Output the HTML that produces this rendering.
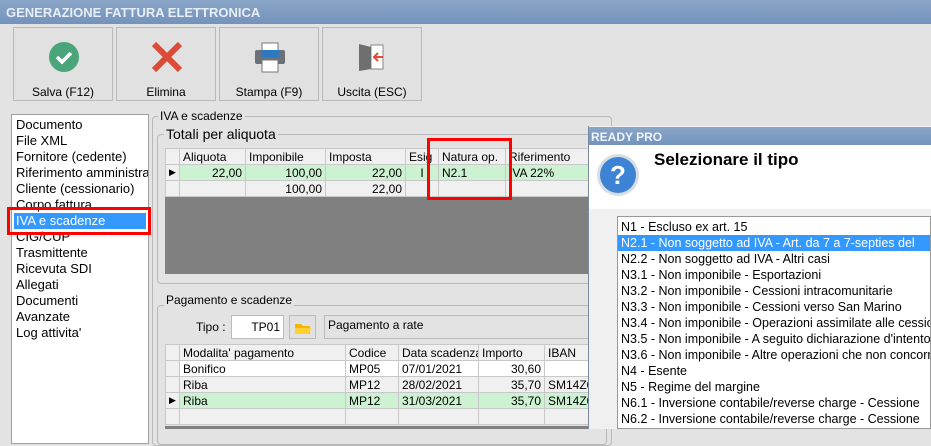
<!DOCTYPE html>
<html><head><meta charset="utf-8"><style>
*{box-sizing:border-box;margin:0;padding:0}
body{width:931px;height:429px;overflow:hidden;background:#e3e3e3;font-family:"Liberation Sans",sans-serif;font-size:12px;color:#000;position:relative}
.a{position:absolute}
.title{left:0;top:0;width:931px;height:24px;background:linear-gradient(#8aa6c8,#7393bb);color:#e8eef6;font-weight:bold;font-size:13px;padding:5px 6px}
.btn{top:27px;width:100px;height:74px;background:#e1e1e1;border:1px solid #b9b9b9;text-align:center}
.btn span{position:absolute;left:0;right:0;top:57px;font-size:12px}
.list{left:11px;top:114px;width:138px;height:330px;background:#fff;border:1px solid #a0a0a0;font-size:13px;line-height:16px;padding:2px 0 0 4px;white-space:nowrap;overflow:hidden}
.grp{border:1px solid #b8b8b8;border-radius:4px}
.lbl{background:#e3e3e3;padding:0 2px}
table{border-collapse:collapse;position:absolute;table-layout:fixed}
td{border:1px solid #c8c8c8;height:16px;padding:0 3px;white-space:nowrap;overflow:hidden;font-size:12px}
.h td{background:#f0f0f0}
.g td{background:#ccf2d2}
.r{text-align:right}
.dlist div{height:16px;line-height:16px;padding-left:3px;font-size:12.5px;white-space:nowrap}
</style></head><body>
<div class="a title">GENERAZIONE FATTURA ELETTRONICA</div>
<div class="a btn" style="left:13px"><svg class="a" style="left:34px;top:13px" width="32" height="32"><circle cx="16" cy="16" r="15" fill="#4aa57a"/><path d="M9 16l5 5 9-9" stroke="#fff" stroke-width="3.5" fill="none"/></svg><span>Salva (F12)</span></div>
<div class="a btn" style="left:116px"><svg class="a" style="left:34px;top:13px" width="32" height="32"><path d="M3 3L29 29M29 3L3 29" stroke="#dc4a38" stroke-width="6"/></svg><span>Elimina</span></div>
<div class="a btn" style="left:219px"><svg class="a" style="left:34px;top:13px" width="32" height="32"><rect x="8" y="2" width="16" height="8" fill="#fff" stroke="#777"/><rect x="1" y="9" width="30" height="14" rx="2" fill="#6b7177"/><rect x="7" y="9" width="18" height="7" fill="#2e78c2"/><rect x="8" y="19" width="16" height="12" fill="#fff" stroke="#777"/></svg><span>Stampa (F9)</span></div>
<div class="a btn" style="left:322px"><svg class="a" style="left:34px;top:13px" width="32" height="32"><rect x="14" y="4" width="12" height="24" fill="#fff" stroke="#888"/><path d="M2 3l12 3v22l-12 2z" fill="#6f6f6f"/><path d="M26 16h-9M21 12l-4 4 4 4" stroke="#e04b3a" stroke-width="2" fill="none"/></svg><span>Uscita (ESC)</span></div>

<div class="a list">Documento<br>File XML<br>Fornitore (cedente)<br>Riferimento amministra<br>Cliente (cessionario)<br>Corpo fattura<br><div style="background:#3399ff;color:#fff;margin-left:-2px;padding-left:2px;width:132px">IVA e scadenze</div>CIG/CUP<br>Trasmittente<br>Ricevuta SDI<br>Allegati<br>Documenti<br>Avanzate<br>Log attivita'</div>
<div class="a" style="left:7px;top:207px;width:144px;height:28px;border:3px solid #f00"></div>

<div class="a grp" style="left:152px;top:116px;width:460px;height:330px"></div>
<div class="a lbl" style="left:158px;top:109px">IVA e scadenze</div>
<div class="a grp" style="left:157px;top:134px;width:450px;height:150px"></div>
<div class="a lbl" style="left:164px;top:126px;font-size:14px">Totali per aliquota</div>
<table style="left:165px;top:148px;width:430px">
<colgroup><col style="width:14px"><col style="width:66px"><col style="width:80px"><col style="width:80px"><col style="width:33px"><col style="width:67px"><col></colgroup>
<tr class="h"><td></td><td>Aliquota</td><td>Imponibile</td><td>Imposta</td><td>Esig</td><td>Natura op.</td><td>Riferimento</td></tr>
<tr class="g"><td style="background:#f0f0f0;font-size:9px">▶</td><td class="r">22,00</td><td class="r">100,00</td><td class="r">22,00</td><td style="text-align:center">I</td><td>N2.1</td><td>IVA 22%</td></tr>
<tr style="background:#f0f0f0"><td></td><td></td><td class="r">100,00</td><td class="r">22,00</td><td></td><td></td><td></td></tr>
</table>
<div class="a" style="left:165px;top:197px;width:430px;height:77px;background:#808080"></div>
<div class="a" style="left:427px;top:138px;width:85px;height:62px;border:3px solid #f00"></div>

<div class="a grp" style="left:157px;top:305px;width:450px;height:140px"></div>
<div class="a lbl" style="left:164px;top:293px">Pagamento e scadenze</div>
<div class="a" style="left:196px;top:320px">Tipo :</div>
<div class="a" style="left:231px;top:315px;width:53px;height:24px;background:#fff;border:1px solid #bbb;text-align:right;padding:4px 3px">TP01</div>
<div class="a" style="left:289px;top:315px;width:27px;height:24px;background:#e1e1e1;border:1px solid #bbb"><svg width="25" height="22"><path d="M5 8h6l2 2h7v8H5z" fill="#f4b400"/><path d="M5 12h16l-2 6H5z" fill="#ffd030"/></svg></div>
<div class="a" style="left:324px;top:315px;width:280px;height:24px;border:1px solid #bbb;padding:2px 3px">Pagamento a rate</div>
<table style="left:165px;top:344px;width:430px">
<colgroup><col style="width:14px"><col style="width:166px"><col style="width:53px"><col style="width:80px"><col style="width:66px"><col></colgroup>
<tr class="h"><td></td><td>Modalita' pagamento</td><td>Codice</td><td>Data scadenza</td><td>Importo</td><td>IBAN</td></tr>
<tr style="background:#fff"><td style="background:#f0f0f0"></td><td>Bonifico</td><td>MP05</td><td>07/01/2021</td><td class="r">30,60</td><td></td></tr>
<tr style="background:#f0f0f0"><td></td><td>Riba</td><td>MP12</td><td>28/02/2021</td><td class="r">35,70</td><td>SM14Z0</td></tr>
<tr class="g"><td style="background:#f0f0f0;font-size:9px">▶</td><td>Riba</td><td>MP12</td><td>31/03/2021</td><td class="r">35,70</td><td>SM14Z0</td></tr>
<tr style="background:#f0f0f0"><td></td><td></td><td></td><td></td><td></td><td></td></tr>
</table>
<div class="a" style="left:165px;top:426px;width:430px;height:3px;background:#808080"></div>

<div class="a" style="left:588px;top:126px;width:343px;height:303px;background:#f0f0f0;border-left:1px solid #7a8aa0"></div>
<div class="a" style="left:589px;top:127px;width:342px;height:18px;background:linear-gradient(#8aa6c8,#7393bb);color:#eef3f9;font-weight:bold;font-size:12px;padding:3px 2px">READY PRO</div>
<div class="a" style="left:589px;top:145px;width:342px;height:64px;background:#fff"></div>
<svg class="a" style="left:595px;top:152px" width="46" height="46"><circle cx="23" cy="23" r="21" fill="#d8dde2"/><circle cx="23" cy="23" r="18" fill="#3c83d6"/><text x="23" y="32" text-anchor="middle" font-family="Liberation Sans" font-weight="bold" font-size="26" fill="#fff">?</text></svg>
<div class="a" style="left:654px;top:150px;font-weight:bold;font-size:17px">Selezionare il tipo</div>
<div class="a dlist" style="left:617px;top:216px;width:314px;height:213px;background:#fff;border:1px solid #999;padding-top:2px;overflow:hidden">
<div>N1 - Escluso ex art. 15</div>
<div style="background:#3399ff;color:#fff">N2.1 - Non soggetto ad IVA - Art. da 7 a 7-septies del</div>
<div>N2.2 - Non soggetto ad IVA - Altri casi</div>
<div>N3.1 - Non imponibile - Esportazioni</div>
<div>N3.2 - Non imponibile - Cessioni intracomunitarie</div>
<div>N3.3 - Non imponibile - Cessioni verso San Marino</div>
<div>N3.4 - Non imponibile - Operazioni assimilate alle cessioni</div>
<div>N3.5 - Non imponibile - A seguito dichiarazione d'intento</div>
<div>N3.6 - Non imponibile - Altre operazioni che non concorrono</div>
<div>N4 - Esente</div>
<div>N5 - Regime del margine</div>
<div>N6.1 - Inversione contabile/reverse charge - Cessione</div>
<div>N6.2 - Inversione contabile/reverse charge - Cessione</div>
</div>
</body></html>
